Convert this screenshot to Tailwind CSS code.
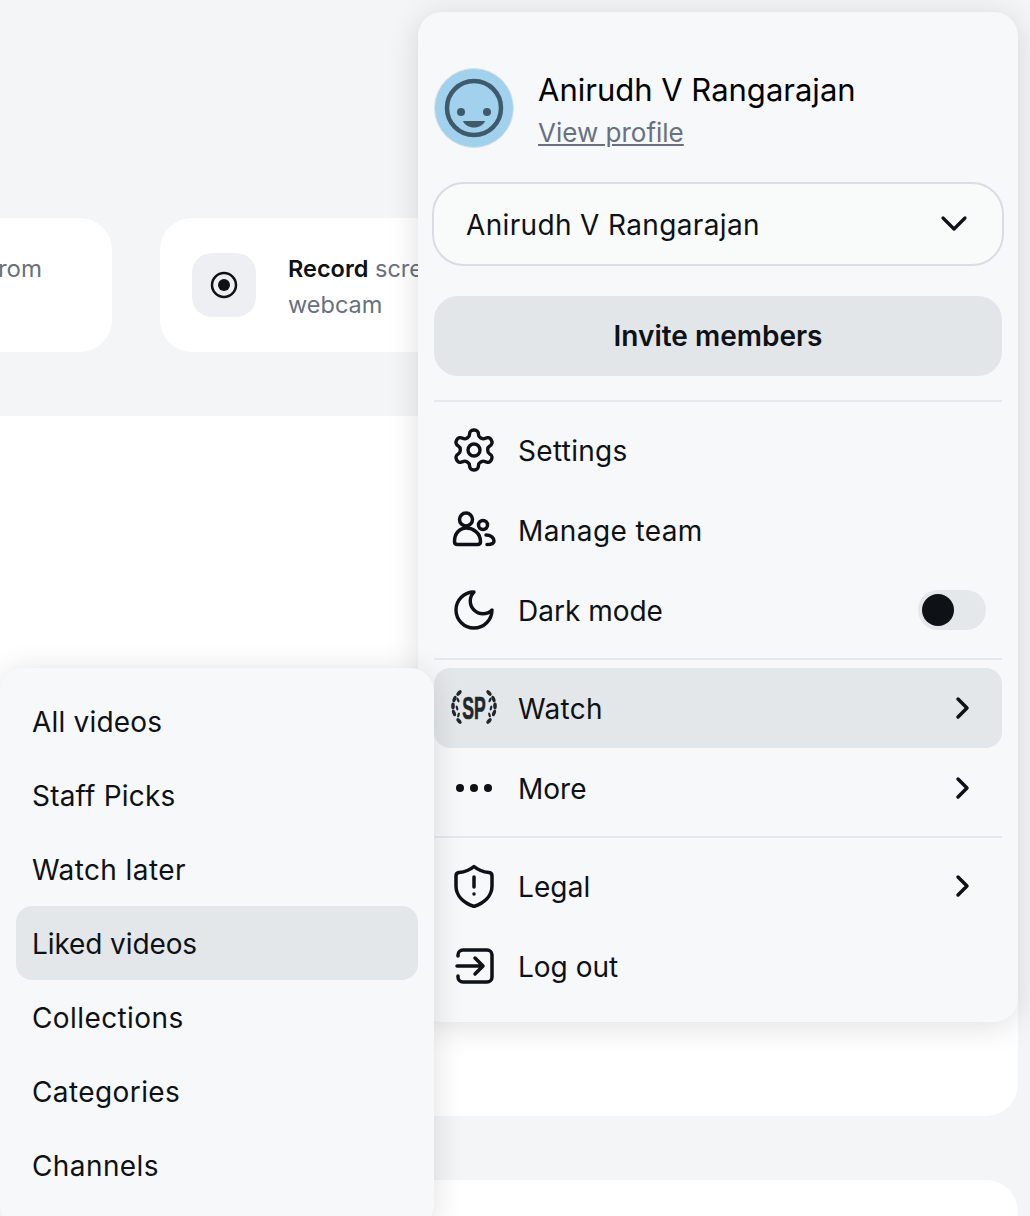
<!DOCTYPE html>
<html lang="en">
<head>
  <meta charset="UTF-8" />
  <title>Account menu</title>
  <script src="https://cdn.jsdelivr.net/npm/@tailwindcss/browser@4"></script>
</head>
<body class="bg-[#f4f5f7] font-['Inter',sans-serif] text-[#0e1115]">
  <div class="relative w-[1030px] h-[1216px] overflow-hidden">

    <!-- page behind the menus -->
    <div class="h-[416px] pt-[218px] flex gap-12 items-start">
      <div class="w-[112px] h-[134px] bg-white rounded-r-[32px] overflow-hidden pt-[33px] text-2xl leading-[36px] text-[#68717d]">
        <span class="block -ml-[11px]">from</span>
      </div>
      <div class="w-[500px] h-[134px] bg-white rounded-[32px] pl-8 flex items-center gap-8">
        <div class="w-16 h-16 rounded-[20px] bg-[#eeeff2] flex items-center justify-center">
          <svg width="28" height="28" viewBox="0 0 28 28" fill="none"><circle cx="14" cy="14" r="12" stroke="#0e1115" stroke-width="2.5"/><circle cx="14" cy="14" r="6" fill="#0e1115"/></svg>
        </div>
        <div class="w-[240px] pt-[3px] text-[23.5px] leading-[36px] text-[#68717d]">
          <b class="font-semibold text-[#0e1115]">Record</b> screen or webcam
        </div>
      </div>
    </div>
    <div class="w-[1018px] h-[700px] bg-white rounded-br-[32px]"></div>
    <div class="w-[1018px] h-[100px] mt-16 bg-white rounded-tr-[32px]"></div>

    <!-- account menu -->
    <div class="absolute left-[418px] top-3 w-[600px] h-[1010px] rounded-3xl bg-[#f6f8fa] shadow-[0_4px_32px_rgba(0,0,0,0.13)] px-4 pt-14">
      <div class="flex items-center gap-6 h-20">
        <svg class="shrink-0" width="80" height="80" viewBox="0 0 80 80">
          <circle cx="40" cy="40" r="39.5" fill="#a1d1ec" stroke="#d5e3ea"/>
          <circle cx="40" cy="40" r="27" fill="none" stroke="#3f5a6b" stroke-width="4.5"/>
          <circle cx="27" cy="44" r="4" fill="#3f5a6b"/>
          <circle cx="53" cy="44" r="4" fill="#3f5a6b"/>
          <path d="M29 53h22c-1.500 4-6 6.500-11 6.500s-9.500-2.500-11-6.500z" fill="#3f5a6b"/>
        </svg>
        <div class="pt-1">
          <div class="text-[31px] leading-[46px] text-black">Anirudh V Rangarajan</div>
          <a href="#" class="block text-[26px] leading-[40px] text-[#68717d] underline">View profile</a>
        </div>
      </div>

      <button class="-ml-0.5 mt-[34px] w-[572px] h-[84px] rounded-[32px] border-2 border-[#d9dde2] bg-[#f9fbfb] pl-8 pr-[34px] flex items-center justify-between text-[28px] tracking-[0.35px]">
        <span class="pt-0.5">Anirudh V Rangarajan</span>
        <svg width="28" height="18" viewBox="0 0 28 18" fill="none"><path d="M3 3l11 11L25 3" stroke="#0e1115" stroke-width="3.200" stroke-linecap="round" stroke-linejoin="round"/></svg>
      </button>

      <button class="mt-[30px] w-[568px] h-20 rounded-3xl bg-[#e3e6e9] text-[28px] font-semibold">Invite members</button>

      <div class="mt-6 border-t-2 border-[#e6e9eb]"></div>

      <div class="mt-2 h-20 px-4 flex items-center gap-5 text-[28px] tracking-[0.3px]">
        <span class="w-12 flex justify-center">
          <svg width="48" height="48" viewBox="0 0 24 24" fill="none" stroke="#0e1115" stroke-width="1.700" stroke-linejoin="round"><path d="M12.220 2h-.44a2 2 0 0 0-2 2v.18a2 2 0 0 1-1 1.730l-.43.25a2 2 0 0 1-2 0l-.15-.08a2 2 0 0 0-2.730.73l-.22.38a2 2 0 0 0 .73 2.730l.15.1a2 2 0 0 1 1 1.720v.51a2 2 0 0 1-1 1.740l-.15.09a2 2 0 0 0-.73 2.730l.22.38a2 2 0 0 0 2.730.73l.15-.08a2 2 0 0 1 2 0l.43.25a2 2 0 0 1 1 1.730V20a2 2 0 0 0 2 2h.44a2 2 0 0 0 2-2v-.18a2 2 0 0 1 1-1.730l.43-.25a2 2 0 0 1 2 0l.15.08a2 2 0 0 0 2.730-.73l.22-.39a2 2 0 0 0-.73-2.730l-.15-.08a2 2 0 0 1-1-1.740v-.5a2 2 0 0 1 1-1.740l.15-.09a2 2 0 0 0 .73-2.730l-.22-.38a2 2 0 0 0-2.730-.73l-.15.08a2 2 0 0 1-2 0l-.43-.25a2 2 0 0 1-1-1.730V4a2 2 0 0 0-2-2z"/><circle cx="12" cy="12" r="3"/></svg>
        </span>
        <span class="pt-0.5">Settings</span>
      </div>
      <div class="h-20 px-4 flex items-center gap-5 text-[28px] tracking-[0.4px]">
        <span class="w-12 flex justify-center">
          <svg width="44" height="44" viewBox="0 0 44 44" fill="none" stroke="#0e1115" stroke-width="3.500" stroke-linecap="round"><circle cx="14" cy="11.500" r="6.500"/><path d="M2.500 33.500C2.500 25 8 20 14.500 20S28.500 25 28.500 33.500C28.500 35.500 27.500 36.500 25.500 36.500H5.500C3.500 36.500 2.500 35.500 2.500 33.500Z"/><circle cx="31" cy="17" r="4.500"/><path d="M34 27C39 27 42 30 42 33C42 35.500 40 36.500 35 36.500"/></svg>
        </span>
        <span class="pt-0.5">Manage team</span>
      </div>
      <div class="h-20 px-4 flex items-center gap-5 text-[28px]">
        <span class="w-12 flex justify-center">
          <svg width="48" height="48" viewBox="0 0 24 24" fill="none" stroke="#0e1115" stroke-width="1.700" stroke-linejoin="round"><path d="M12 3a6 6 0 0 0 9 9 9 9 0 1 1-9-9Z"/></svg>
        </span>
        <span class="pt-0.5">Dark mode</span>
        <span class="ml-auto w-[68px] h-10 rounded-full bg-[#e5e8ea] pl-1 pt-1"><span class="block w-8 h-8 rounded-full bg-[#0e1115]"></span></span>
      </div>

      <div class="mt-2 border-t-2 border-[#e6e9eb]"></div>

      <div class="mt-2 h-20 px-4 rounded-2xl bg-[#e4e7ea] flex items-center gap-5 text-[28px] tracking-[0.3px]">
        <span class="w-12 flex justify-center relative">
          <svg width="48" height="40" viewBox="0 0 48 40" fill="#20262c">
            <g><ellipse cx="9" cy="5" rx="1.800" ry="3.400" transform="rotate(40 9 5)"/><ellipse cx="4.500" cy="11" rx="1.800" ry="3.400" transform="rotate(20 4.500 11)"/><ellipse cx="3" cy="18" rx="1.800" ry="3.400"/><ellipse cx="4" cy="25" rx="1.800" ry="3.400" transform="rotate(-20 4 25)"/><ellipse cx="9" cy="33" rx="1.800" ry="3.400" transform="rotate(-40 9 33)"/><ellipse cx="8" cy="12" rx="1.200" ry="2.600" transform="rotate(-25 8 12)"/><ellipse cx="7" cy="20" rx="1.200" ry="2.600" transform="rotate(-15 7 20)"/><ellipse cx="8.500" cy="27" rx="1.200" ry="2.600" transform="rotate(15 8.500 27)"/></g>
            <g transform="translate(48 0) scale(-1 1)"><ellipse cx="9" cy="5" rx="1.800" ry="3.400" transform="rotate(40 9 5)"/><ellipse cx="4.500" cy="11" rx="1.800" ry="3.400" transform="rotate(20 4.500 11)"/><ellipse cx="3" cy="18" rx="1.800" ry="3.400"/><ellipse cx="4" cy="25" rx="1.800" ry="3.400" transform="rotate(-20 4 25)"/><ellipse cx="9" cy="33" rx="1.800" ry="3.400" transform="rotate(-40 9 33)"/><ellipse cx="8" cy="12" rx="1.200" ry="2.600" transform="rotate(-25 8 12)"/><ellipse cx="7" cy="20" rx="1.200" ry="2.600" transform="rotate(-15 7 20)"/><ellipse cx="8.500" cy="27" rx="1.200" ry="2.600" transform="rotate(15 8.500 27)"/></g>
          </svg>
          <span class="absolute inset-0 flex items-center justify-center text-[32px] font-bold leading-none tracking-normal scale-x-[0.55] [-webkit-text-stroke:0.7px_#20262c] text-[#20262c] font-['Liberation_Sans',sans-serif]">SP</span>
        </span>
        <span class="pt-0.5">Watch</span>
        <svg class="ml-auto mr-[14px]" width="18" height="24" viewBox="0 0 18 24" fill="none"><path d="M4 3l9 9-9 9" stroke="#0e1115" stroke-width="3.500" stroke-linecap="round" stroke-linejoin="round"/></svg>
      </div>
      <div class="h-20 px-4 flex items-center gap-5 text-[28px]">
        <span class="w-12 flex justify-center">
          <svg width="40" height="10" viewBox="0 0 40 10" fill="#0e1115"><circle cx="6" cy="5" r="4"/><circle cx="20" cy="5" r="4"/><circle cx="34" cy="5" r="4"/></svg>
        </span>
        <span class="pt-0.5">More</span>
        <svg class="ml-auto mr-[14px]" width="18" height="24" viewBox="0 0 18 24" fill="none"><path d="M4 3l9 9-9 9" stroke="#0e1115" stroke-width="3.500" stroke-linecap="round" stroke-linejoin="round"/></svg>
      </div>

      <div class="mt-2 border-t-2 border-[#e6e9eb]"></div>

      <div class="mt-2 h-20 px-4 flex items-center gap-5 text-[28px] tracking-[0.1px]">
        <span class="w-12 flex justify-center">
          <svg width="40" height="44" viewBox="0 0 40 44" fill="none" stroke="#0e1115" stroke-width="3.500" stroke-linecap="round" stroke-linejoin="round"><path d="M20 2.500C24 6 30 8 35 8.500C37 8.700 38 10 38 12V22C38 32 30 39 20 42.500C10 39 2 32 2 22V12C2 10 3 8.700 5 8.500C10 8 16 6 20 2.500Z"/><path d="M20 13V23"/><path d="M20 30V30.100"/></svg>
        </span>
        <span class="pt-0.5">Legal</span>
        <svg class="ml-auto mr-[14px]" width="18" height="24" viewBox="0 0 18 24" fill="none"><path d="M4 3l9 9-9 9" stroke="#0e1115" stroke-width="3.500" stroke-linecap="round" stroke-linejoin="round"/></svg>
      </div>
      <div class="h-20 px-4 flex items-center gap-5 text-[28px]">
        <span class="w-12 flex justify-center">
          <svg width="40" height="40" viewBox="0 0 40 40" fill="none" stroke="#0e1115" stroke-width="3.500" stroke-linecap="round" stroke-linejoin="round"><path d="M4 10V9a5 5 0 0 1 5-5H33a5 5 0 0 1 5 5V31a5 5 0 0 1-5 5H9a5 5 0 0 1-5-5V30"/><path d="M3 20H28M21 12l8 8-8 8"/></svg>
        </span>
        <span class="pt-0.5">Log out</span>
      </div>
    </div>

    <!-- watch submenu -->
    <div class="absolute left-0 top-[668px] w-[434px] h-[560px] rounded-3xl bg-[#f6f8fa] shadow-[0_4px_32px_rgba(0,0,0,0.13)] p-4 text-[28px] tracking-[0.2px]">
      <div class="h-[74px] px-4 pt-0.5 flex items-center">All videos</div>
      <div class="h-[74px] px-4 pt-0.5 flex items-center">Staff Picks</div>
      <div class="h-[74px] px-4 pt-0.5 flex items-center tracking-[0.4px]">Watch later</div>
      <div class="h-[74px] px-4 pt-0.5 flex items-center rounded-2xl bg-[#e4e7ea] tracking-[-0.1px]">Liked videos</div>
      <div class="h-[74px] px-4 pt-0.5 flex items-center tracking-[0.4px]">Collections</div>
      <div class="h-[74px] px-4 pt-0.5 flex items-center tracking-[0.4px]">Categories</div>
      <div class="h-[74px] px-4 pt-0.5 flex items-center tracking-[0.4px]">Channels</div>
    </div>
  </div>
</body>
</html>
